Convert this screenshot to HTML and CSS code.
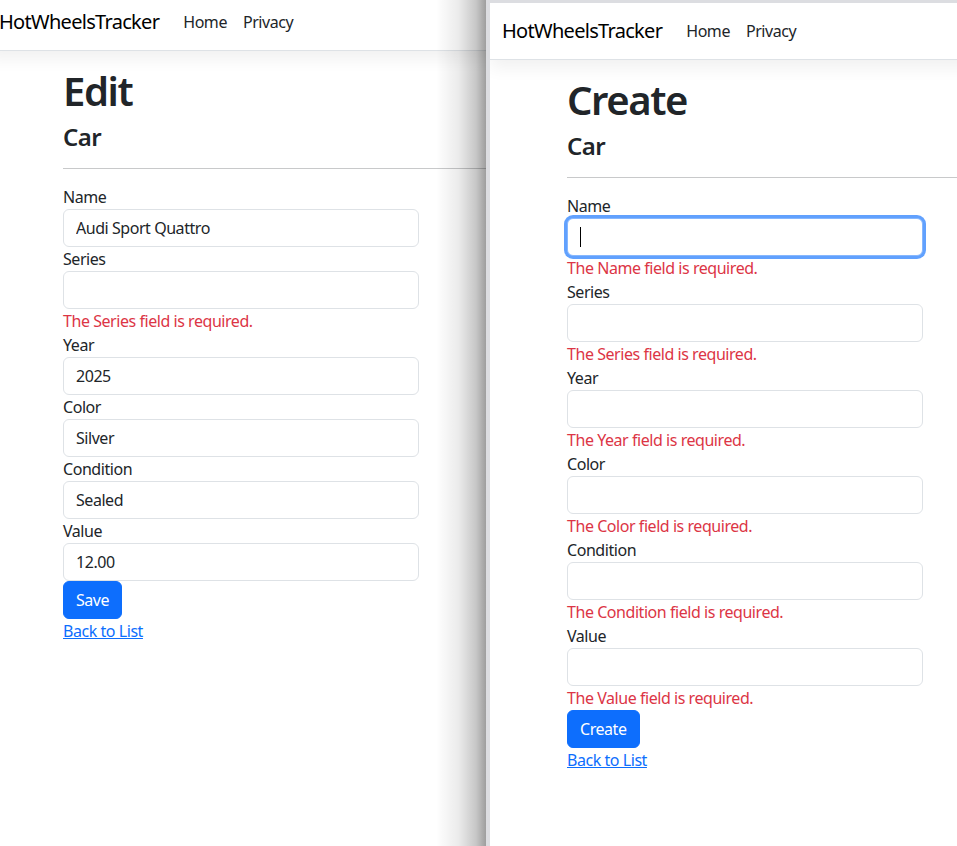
FILE: index.html
```html
<!DOCTYPE html>
<html lang="en">
<head>
<meta charset="utf-8">
<title>HotWheelsTracker</title>
<link rel="stylesheet" href="styles.css">
</head>
<body>
<div class="desktop">
  <div class="win win-left">
    <nav class="navbar">
      <a class="brand">HotWheelsTracker</a>
      <a class="nav-link">Home</a>
      <a class="nav-link">Privacy</a>
    </nav>
    <main class="main main-left">
      <h1>Edit</h1>
      <h4>Car</h4>
      <hr>
      <form class="form">
        <div class="form-group">
          <label>Name</label>
          <input class="form-control" value="Audi Sport Quattro">
        </div>
        <div class="form-group">
          <label>Series</label>
          <input class="form-control" value="">
          <span class="text-danger">The Series field is required.</span>
        </div>
        <div class="form-group">
          <label>Year</label>
          <input class="form-control" value="2025">
        </div>
        <div class="form-group">
          <label>Color</label>
          <input class="form-control" value="Silver">
        </div>
        <div class="form-group">
          <label>Condition</label>
          <input class="form-control" value="Sealed">
        </div>
        <div class="form-group">
          <label>Value</label>
          <input class="form-control" value="12.00">
        </div>
        <div class="form-group">
          <button type="button" class="btn">Save</button>
        </div>
      </form>
      <div><a class="link">Back to List</a></div>
    </main>
  </div>

  <div class="shade"></div>
  <div class="edge"></div>
  <div class="topband"></div>

  <div class="win win-right">
    <nav class="navbar">
      <a class="brand">HotWheelsTracker</a>
      <a class="nav-link">Home</a>
      <a class="nav-link">Privacy</a>
    </nav>
    <main class="main main-right">
      <h1>Create</h1>
      <h4>Car</h4>
      <hr>
      <form class="form">
        <div class="form-group">
          <label>Name</label>
          <div class="form-control focused"><span class="caret"></span></div>
          <span class="text-danger">The Name field is required.</span>
        </div>
        <div class="form-group">
          <label>Series</label>
          <input class="form-control" value="">
          <span class="text-danger">The Series field is required.</span>
        </div>
        <div class="form-group">
          <label>Year</label>
          <input class="form-control" value="">
          <span class="text-danger">The Year field is required.</span>
        </div>
        <div class="form-group">
          <label>Color</label>
          <input class="form-control" value="">
          <span class="text-danger">The Color field is required.</span>
        </div>
        <div class="form-group">
          <label>Condition</label>
          <input class="form-control" value="">
          <span class="text-danger">The Condition field is required.</span>
        </div>
        <div class="form-group">
          <label>Value</label>
          <input class="form-control" value="">
          <span class="text-danger">The Value field is required.</span>
        </div>
        <div class="form-group">
          <button type="button" class="btn">Create</button>
        </div>
      </form>
      <div><a class="link">Back to List</a></div>
    </main>
  </div>
</div>
</body>
</html>
```

FILE: styles.css
```css
html, body {
  margin: 0;
  padding: 0;
}
body {
  width: 957px;
  height: 846px;
  overflow: hidden;
  background: #ffffff;
  font-family: "Noto Sans", "Open Sans", sans-serif;
  font-size: 16px;
  line-height: 24px;
  letter-spacing: -0.45px;
  color: #212529;
}
.desktop {
  position: relative;
  width: 957px;
  height: 846px;
  overflow: hidden;
  background: #ffffff;
}
.win {
  position: absolute;
  background: #ffffff;
  overflow: hidden;
}
.win-left {
  left: -13px;
  top: -6px;
  width: 1000px;
  height: 900px;
}
.win-right {
  left: 490px;
  top: 3px;
  width: 700px;
  height: 900px;
  border-top-left-radius: 8px;
}
.shade {
  position: absolute;
  left: 436px;
  top: 0;
  width: 50px;
  height: 846px;
  background: linear-gradient(to right, rgba(0,0,0,0) 0%, rgba(0,0,0,0.08) 45%, rgba(0,0,0,0.22) 80%, rgba(0,0,0,0.38) 100%);
}
.edge {
  position: absolute;
  left: 486px;
  top: 0;
  width: 4px;
  height: 846px;
  background: #dcdde1;
}
.topband {
  position: absolute;
  left: 486px;
  top: 0;
  width: 471px;
  height: 3px;
  background: #dcdde1;
}
.navbar {
  box-sizing: border-box;
  height: 57px;
  padding: 8px 12px;
  display: flex;
  align-items: center;
  background: #ffffff;
  border-bottom: 1px solid #dee2e6;
  box-shadow: 0 8px 16px rgba(0,0,0,0.06);
  position: relative;
}
.brand {
  font-size: 20px;
  line-height: 30px;
  padding: 5px 0;
  margin-right: 16px;
  letter-spacing: -0.7px;
  color: #000000;
}
.nav-link {
  padding: 8px;
  font-size: 16px;
  line-height: 24px;
  color: #212529;
}
.main {
  padding-top: 16px;
}
.main-left {
  padding-left: 76px;
}
.main-right {
  padding-left: 77px;
}
h1 {
  margin: 0 0 8px;
  font-size: 40px;
  line-height: 48px;
  font-weight: 600;
  letter-spacing: -1.4px;
}
h4 {
  margin: 0 0 8px;
  font-size: 24px;
  line-height: 28.8px;
  font-weight: 600;
  letter-spacing: -0.6px;
}
hr {
  margin: 16px 0;
  border: 0;
  border-top: 1px solid #c8c9ca;
  width: 1100px;
}
.form {
  width: 356px;
  margin: 0;
}
label {
  display: block;
  line-height: 24px;
}
.form-control {
  display: block;
  box-sizing: border-box;
  width: 100%;
  height: 38px;
  margin: 0;
  padding: 6px 12px;
  font: inherit;
  font-size: 16px;
  line-height: 24px;
  letter-spacing: -0.45px;
  color: #212529;
  background: #ffffff;
  border: 1px solid #dee2e6;
  border-radius: 6px;
  outline: none;
}
.focused {
  border-color: #86b7fe;
  box-shadow: 0 0 0 3px rgba(13,110,253,0.65);
  display: flex;
  align-items: center;
}
.caret {
  display: inline-block;
  width: 1px;
  height: 20px;
  background: #000000;
}
.text-danger {
  display: block;
  color: #dc3545;
  line-height: 24px;
}
.btn {
  display: inline-block;
  box-sizing: border-box;
  height: 38px;
  margin: 0;
  padding: 6px 12px;
  font: inherit;
  font-size: 16px;
  line-height: 24px;
  letter-spacing: -0.45px;
  color: #ffffff;
  background: #0d6efd;
  border: 1px solid #0d6efd;
  border-radius: 6px;
  vertical-align: top;
}
.form-group:last-child {
  height: 38px;
}
.link {
  color: #0d6efd;
  text-decoration: underline;
}
```
